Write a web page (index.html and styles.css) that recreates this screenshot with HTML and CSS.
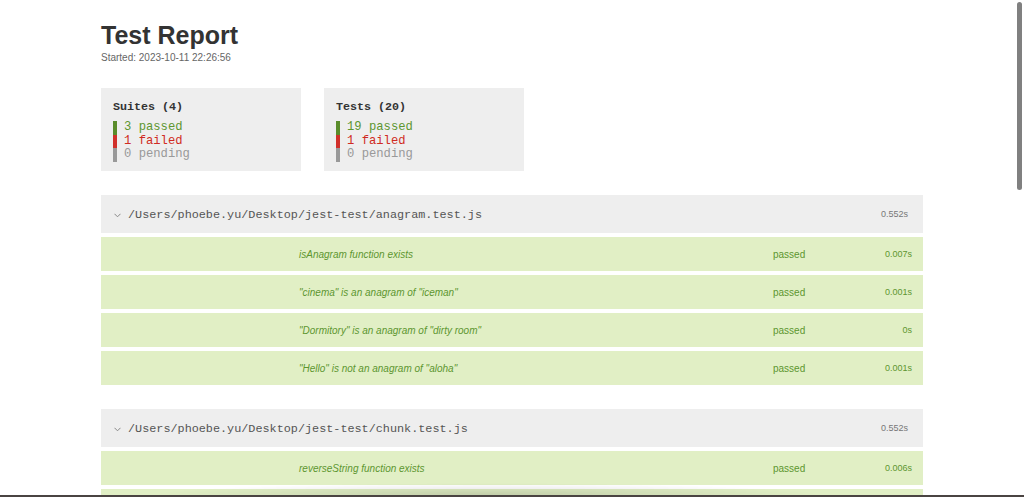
FILE: index.html
```html
<!DOCTYPE html>
<html lang="en">
<head>
<meta charset="utf-8">
<title>Test Report</title>
<link rel="stylesheet" href="styles.css">
</head>
<body>
<main class="report">
  <header class="report-header">
    <h1 class="title">Test Report</h1>
    <p class="started">Started: 2023-10-11 22:26:56</p>
  </header>

  <section class="summary">
    <div class="summary-box">
      <div class="summary-title">Suites (4)</div>
      <div class="summary-line passed">3 passed</div>
      <div class="summary-line failed">1 failed</div>
      <div class="summary-line pending">0 pending</div>
    </div>
    <div class="summary-box">
      <div class="summary-title">Tests (20)</div>
      <div class="summary-line passed">19 passed</div>
      <div class="summary-line failed">1 failed</div>
      <div class="summary-line pending">0 pending</div>
    </div>
  </section>

  <section class="suite">
    <div class="suite-info">
      <svg class="chevron" width="7" height="5" viewBox="0 0 7 5"><polyline points="0.5,0.8 3.5,3.8 6.5,0.8" fill="none" stroke="#888" stroke-width="1"/></svg>
      <span class="suite-path">/Users/phoebe.yu/Desktop/jest-test/anagram.test.js</span>
      <span class="suite-time">0.552s</span>
    </div>
    <div class="test-result">
      <div class="test-suitename"></div>
      <div class="test-title">isAnagram function exists</div>
      <div class="test-status">passed</div>
      <div class="test-duration">0.007s</div>
    </div>
    <div class="test-result">
      <div class="test-suitename"></div>
      <div class="test-title">"cinema" is an anagram of "iceman"</div>
      <div class="test-status">passed</div>
      <div class="test-duration">0.001s</div>
    </div>
    <div class="test-result">
      <div class="test-suitename"></div>
      <div class="test-title">"Dormitory" is an anagram of "dirty room"</div>
      <div class="test-status">passed</div>
      <div class="test-duration">0s</div>
    </div>
    <div class="test-result">
      <div class="test-suitename"></div>
      <div class="test-title">"Hello" is not an anagram of "aloha"</div>
      <div class="test-status">passed</div>
      <div class="test-duration">0.001s</div>
    </div>
  </section>

  <section class="suite">
    <div class="suite-info">
      <svg class="chevron" width="7" height="5" viewBox="0 0 7 5"><polyline points="0.5,0.8 3.5,3.8 6.5,0.8" fill="none" stroke="#888" stroke-width="1"/></svg>
      <span class="suite-path">/Users/phoebe.yu/Desktop/jest-test/chunk.test.js</span>
      <span class="suite-time">0.552s</span>
    </div>
    <div class="test-result">
      <div class="test-suitename"></div>
      <div class="test-title">reverseString function exists</div>
      <div class="test-status">passed</div>
      <div class="test-duration">0.006s</div>
    </div>
    <div class="test-result"></div>
  </section>
</main>
<div class="scrollbar"></div>
<div class="window-shadow"></div>
<div class="window-edge"></div>
</body>
</html>
```
FILE: styles.css
```css
html, body {
  margin: 0;
  padding: 0;
  background: #fff;
  overflow: hidden;
  height: 497px;
}
body {
  font-family: "Liberation Sans", Arial, sans-serif;
  color: #333;
}
.report {
  width: 822px;
  margin: 0 auto;
  padding-top: 21px;
}
.report-header {
  display: flex;
  flex-direction: column;
}
.title {
  margin: 0;
  font-size: 25px;
  line-height: 29px;
  font-weight: bold;
  color: #333;
}
.started {
  margin: 2px 0 0;
  font-size: 10px;
  line-height: 12px;
  color: #666;
}
.summary {
  display: flex;
  gap: 23px;
  margin-top: 24px;
}
.summary-box {
  width: 200px;
  height: 83px;
  box-sizing: border-box;
  background: #eee;
  padding: 12px 12px 0;
  font-family: "Liberation Mono", "Courier New", monospace;
}
.summary-title {
  font-size: 11.7px;
  line-height: 14px;
  font-weight: bold;
  color: #333;
  margin-bottom: 7px;
}
.summary-line {
  font-size: 12.2px;
  line-height: 13.5px;
  border-left: 4px solid;
  padding-left: 7px;
}
.summary-line.passed { color: #5d9630; border-color: #5a8c2b; }
.summary-line.failed { color: #d02a22; border-color: #d0302a; }
.summary-line.pending { color: #999; border-color: #999; }

.suite {
  display: flex;
  flex-direction: column;
  gap: 4px;
  margin-top: 24px;
}
.suite-info {
  display: flex;
  align-items: center;
  height: 38px;
  background: #eee;
  padding: 0 15px 0 13px;
}
.chevron {
  margin-right: 7px;
  margin-top: 3px;
}
.suite-path {
  font-family: "Liberation Mono", "Courier New", monospace;
  font-size: 11.8px;
  color: #555;
  flex: 1;
  margin-top: 1px;
}
.suite-time {
  font-size: 9px;
  color: #777;
}
.test-result {
  display: grid;
  grid-template-columns: 198px 474px 1fr auto;
  align-items: center;
  height: 34px;
  background: #e1efc5;
  padding-right: 11px;
  color: #5d9630;
}
.test-title {
  font-size: 10px;
  font-style: italic;
  margin-top: 1px;
}
.test-status {
  font-size: 10px;
  margin-top: 1px;
}
.test-duration {
  font-size: 9px;
  margin-top: -1px;
}
.scrollbar {
  position: fixed;
  top: 2px;
  right: 2px;
  width: 5px;
  height: 188px;
  border-radius: 3px;
  background: #808080;
}
.window-shadow {
  position: fixed;
  left: 150px;
  right: 200px;
  bottom: 2px;
  height: 12px;
  background: radial-gradient(ellipse at 50% 100%, rgba(0,0,0,0.13), rgba(0,0,0,0) 70%);
  pointer-events: none;
}
.window-edge {
  position: fixed;
  left: 0;
  right: 0;
  bottom: 0;
  height: 2px;
  background: #4a4442;
}
```
